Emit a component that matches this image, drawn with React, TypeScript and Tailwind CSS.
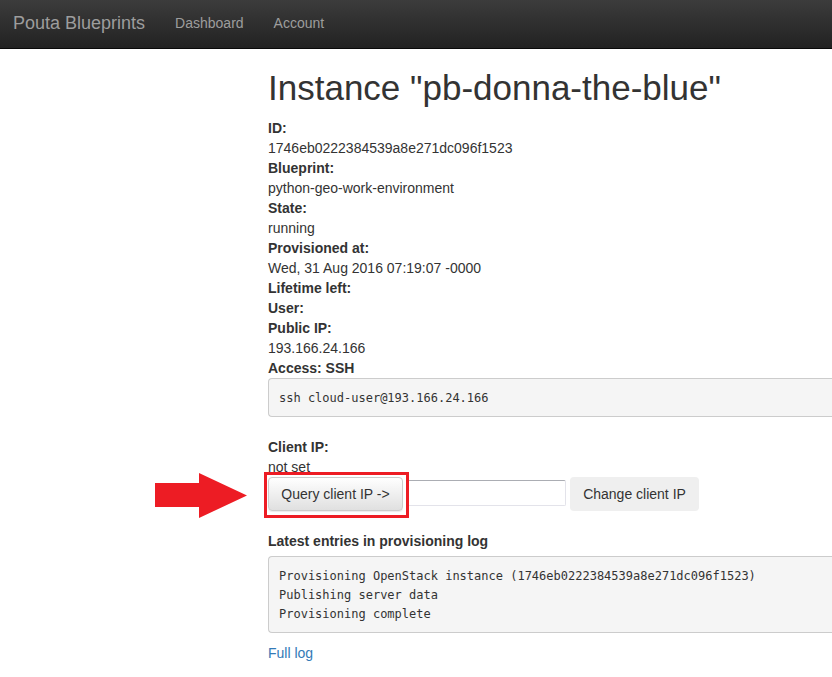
import React from 'react';

const details: [string, string][] = [
  ['ID:', '1746eb0222384539a8e271dc096f1523'],
  ['Blueprint:', 'python-geo-work-environment'],
  ['State:', 'running'],
  ['Provisioned at:', 'Wed, 31 Aug 2016 07:19:07 -0000'],
  ['Lifetime left:', ''],
  ['User:', ''],
  ['Public IP:', '193.166.24.166'],
  ['Access: SSH', ''],
];

const pre =
  'rounded-l-[4px] border border-r-0 border-[#ccc] bg-[#f5f5f5] px-[10px] pt-[10px] pb-2 font-["DejaVu_Sans_Mono",monospace] text-[12px] leading-[19px] text-[#333]';

export default function App() {
  return (
    <div className='overflow-hidden bg-white font-["Liberation_Sans",Arial,sans-serif] text-[14px] leading-5 text-[#333]'>
      <nav className="flex h-[49px] items-center border-b border-[#090909] bg-linear-to-b from-[#3c3c3c] to-[#222] pb-[2px] text-[#9d9d9d]">
        <a href="#home" className="pl-[13px] text-[18px]">Pouta Blueprints</a>
        <a href="#dashboard" className="pl-[30px]">Dashboard</a>
        <a href="#account" className="pl-[30px]">Account</a>
      </nav>
      <main className="pt-5 pl-[268px]">
        <h1 className="mb-3 text-[35px] leading-[37px] whitespace-nowrap">Instance "pb-donna-the-blue"</h1>
        <dl>
          {details.map(([term, value]) => (
            <React.Fragment key={term}>
              <dt className="font-bold">{term}</dt>
              {value && <dd>{value}</dd>}
            </React.Fragment>
          ))}
        </dl>
        <pre className={pre}>ssh cloud-user@193.166.24.166</pre>
        <dl className="mt-5">
          <dt className="font-bold">Client IP:</dt>
          <dd>not set</dd>
        </dl>
        <form className="flex items-start" onSubmit={(e) => e.preventDefault()}>
          <div className="relative z-10">
            <button type="button" className="block h-[34px] w-[135px] rounded-[4px] border border-[#ccc] bg-linear-to-b from-white to-[#e0e0e0] shadow-[0_1px_1px_rgba(0,0,0,0.08)]">Query client IP -&gt;</button>
            <div className="pointer-events-none absolute -top-[5px] -right-[6px] -bottom-[7px] -left-1 border-[3px] border-[#ed1c24]" />
            <svg className="absolute -top-1 -left-[113px]" width="92" height="45" viewBox="0 0 92 45" aria-hidden="true">
              <path d="M0 10H44V0L92 22.5L44 45V34H0Z" fill="#ed1c24" />
            </svg>
          </div>
          <input aria-label="Client IP" className="mt-[3px] ml-1 h-[26px] w-[159px] rounded-[2px] border border-[#e3e3ea] border-t-[#abadb3] px-1" />
          <button type="submit" className="ml-1 h-[34px] w-[129px] rounded-[4px] bg-[#efefef]">Change client IP</button>
        </form>
        <h2 className="mt-5 mb-[5px] font-bold">Latest entries in provisioning log</h2>
        <pre className={pre}>{`Provisioning OpenStack instance (1746eb0222384539a8e271dc096f1523)
Publishing server data
Provisioning complete`}</pre>
        <a href="#log" className="mt-[10px] inline-block text-[#337ab7]">Full log</a>
      </main>
    </div>
  );
}
